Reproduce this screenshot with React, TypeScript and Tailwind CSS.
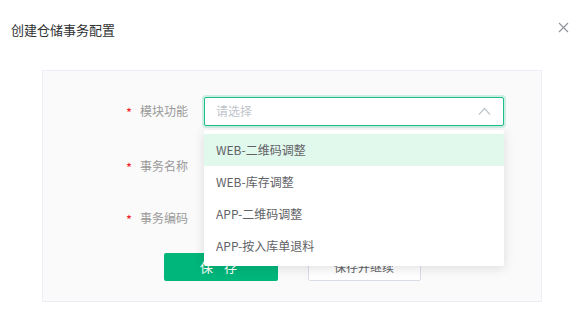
const OPTIONS = ["WEB-二维码调整", "WEB-库存调整", "APP-二维码调整", "APP-按入库单退料"];

const FIELDS = [
  { label: "模块功能", top: "mt-[25px]" },
  { label: "事务名称", top: "mt-[25px]" },
  { label: "事务编码", top: "mt-[22px]" },
];

function Label({ text }: { text: string }) {
  return (
    <div className="w-[149px] shrink-0 flex items-center justify-end pr-[4px] text-[12px] text-[#999]">
      <span className="text-[#f5222d] mr-[8px] text-[13px] leading-none pt-[3px]">*</span>
      {text}
    </div>
  );
}

export default function App() {
  return (
    <div className="w-[583px] h-[330px] bg-white font-['Noto_Sans_CJK_SC',sans-serif] relative">
      <header className="h-[60px] pl-[11px] pr-[14px] flex items-center justify-between">
        <h1 className="text-[13px] text-[#303133] font-normal">创建仓储事务配置</h1>
        <button className="w-[12px] h-[12px] flex items-center justify-center mb-[6px]">
          <svg width="11" height="11" viewBox="0 0 11 11" fill="none" stroke="#909399" strokeWidth="1.1">
            <path d="M1 1L10 10M10 1L1 10" />
          </svg>
        </button>
      </header>

      <div className="ml-[42px] mt-[10px] w-[500px] h-[232px] border border-[#ebeef5] bg-[#fafafa] flex flex-col">
        {FIELDS.map((f, i) => (
          <div key={f.label} className={`flex items-center h-[30px] ${f.top}`}>
            <Label text={f.label} />
            <div className="relative ml-[12px]">
              {i === 0 ? (
                <div className="w-[300px] h-[29px] bg-white border border-[#1dbf87] rounded-[2px] shadow-[0_0_0_2px_rgba(29,191,135,0.2)] flex items-center justify-between pl-[11px] pr-[12px]">
                  <span className="text-[12px] text-[#c0c4cc]">请选择</span>
                  <svg width="13" height="8" viewBox="0 0 13 8" fill="none" stroke="#c0c4cc" strokeWidth="1.2">
                    <path d="M1 7.5L6.5 1.5L12 7.5" />
                  </svg>
                </div>
              ) : (
                <div className="w-[300px] h-[29px] bg-white border border-[#dcdfe6] rounded-[2px]" />
              )}
              {i === 0 && (
                <ul className="absolute left-0 top-[33px] z-10 w-[300px] bg-white rounded-[2px] py-[4px] shadow-[0_2px_12px_rgba(0,0,0,0.12)]">
                  {OPTIONS.map((o, j) => (
                    <li
                      key={o}
                      className={`h-[32px] flex items-center pl-[12px] text-[12px] text-[#606266] ${
                        j === 0 ? "bg-[#e1f8ec]" : ""
                      }`}
                    >
                      {o}
                    </li>
                  ))}
                </ul>
              )}
            </div>
          </div>
        ))}

        <div className="flex justify-center gap-[30px] mt-[20px]">
          <button className="w-[114px] h-[28px] bg-[#00b67a] text-white text-[13px] tracking-[4px] rounded-[2px]">
            保 存
          </button>
          <button className="w-[113px] h-[28px] bg-white border border-[#d8dce6] text-[#606266] text-[12px] rounded-[2px]">
            保存并继续
          </button>
        </div>
      </div>
    </div>
  );
}
